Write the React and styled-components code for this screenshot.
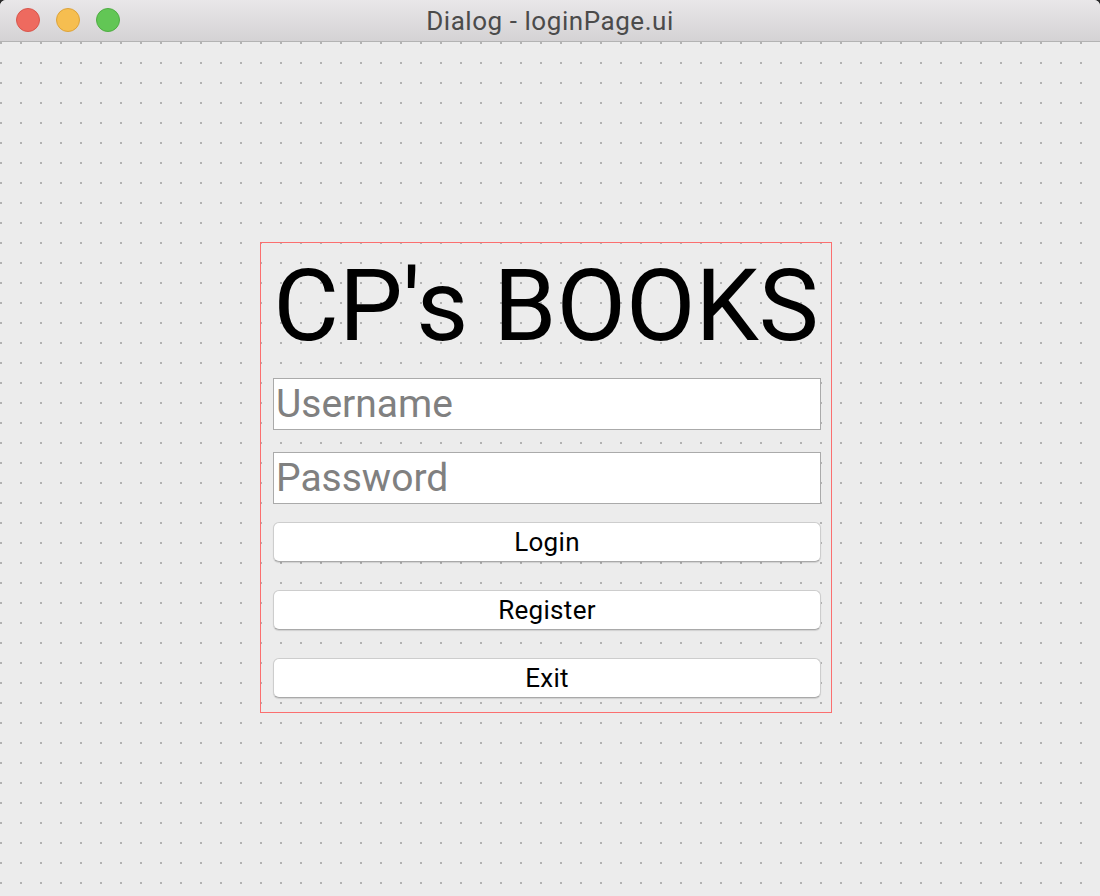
import React from "react";
import styled, { createGlobalStyle } from "styled-components";

const Global = createGlobalStyle`
  html, body { margin: 0; padding: 0; background: #2a2a2a; }
  body { font-family: Roboto, "Liberation Sans", Arial, sans-serif; }
  * { box-sizing: border-box; }
`;

const Window = styled.div`
  width: 1100px;
  height: 896px;
  display: flex;
  flex-direction: column;
  border-radius: 6px 6px 0 0;
  overflow: hidden;
  background: #ececec;
`;

const TitleBar = styled.div`
  height: 42px;
  flex: none;
  display: flex;
  align-items: center;
  position: relative;
  background: linear-gradient(#e9e7e9, #d4d2d4);
  border-bottom: 1px solid #b3b3b3;
  padding-left: 16px;
  gap: 16px;
`;

const Light = styled.span`
  width: 24px;
  height: 24px;
  border-radius: 50%;
  background: ${(p) => p.$c};
  border: 1px solid ${(p) => p.$b};
  margin-top: -2px;
`;

const Title = styled.div`
  position: absolute;
  left: 0;
  right: 0;
  top: 0;
  height: 41px;
  display: flex;
  align-items: center;
  justify-content: center;
  font-size: 26px;
  letter-spacing: 0.55px;
  padding-top: 1px;
  color: #4b4b4b;
  pointer-events: none;
`;

const Canvas = styled.div`
  flex: 1;
  background-color: #ececec;
  background-image: radial-gradient(circle at 1px 1px, #b2b2b2 1.2px, transparent 1.3px);
  background-size: 20px 20px;
  background-position: 0 0;
  padding: 200px 0 0 260px;
`;

const Frame = styled.div`
  width: 572px;
  height: 471px;
  border: 1px solid #fb6f6f;
  padding: 13px 10px 0 12px;
  display: flex;
  flex-direction: column;
`;

const Heading = styled.div`
  flex: none;
  font-size: 101px;
  line-height: 100px;
  height: 100px;
  text-align: center;
  color: #000;
  white-space: nowrap;
  margin-bottom: 22px;
  margin-left: -2px;
`;

const Field = styled.input`
  flex: none;
  width: 548px;
  height: 52px;
  border: 1px solid #aaaaaa;
  background: #fff;
  font-family: Roboto, "Liberation Sans", Arial, sans-serif;
  font-size: 39px;
  padding: 0 0 0 2px;
  margin: 0 0 ${(p) => p.$mb}px 0;
  outline: none;
  &::placeholder { color: #808080; }
`;

const Button = styled.button`
  flex: none;
  width: 548px;
  height: 40px;
  border: 1px solid #cdcdcd;
  border-bottom-color: #a9a9a9;
  border-radius: 6px;
  background: #fff;
  box-shadow: 0 1px 1px rgba(0, 0, 0, 0.12);
  font-family: Roboto, "Liberation Sans", Arial, sans-serif;
  font-size: 26px;
  letter-spacing: 0.3px;
  color: #000;
  padding: 0;
  margin-bottom: ${(p) => p.$mb}px;
  cursor: default;
`;

export default function App() {
  return (
    <>
      <Global />
      <Window>
        <TitleBar>
          <Light $c="#ee6a5f" $b="#d8564c" />
          <Light $c="#f6be50" $b="#dda33a" />
          <Light $c="#62c655" $b="#4fad43" />
          <Title>Dialog - loginPage.ui</Title>
        </TitleBar>
        <Canvas>
          <Frame>
            <Heading>CP's BOOKS</Heading>
            <Field placeholder="Username" $mb={22} />
            <Field placeholder="Password" type="password" $mb={18} />
            <Button $mb={28}>Login</Button>
            <Button $mb={28}>Register</Button>
            <Button $mb={0}>Exit</Button>
          </Frame>
        </Canvas>
      </Window>
    </>
  );
}
